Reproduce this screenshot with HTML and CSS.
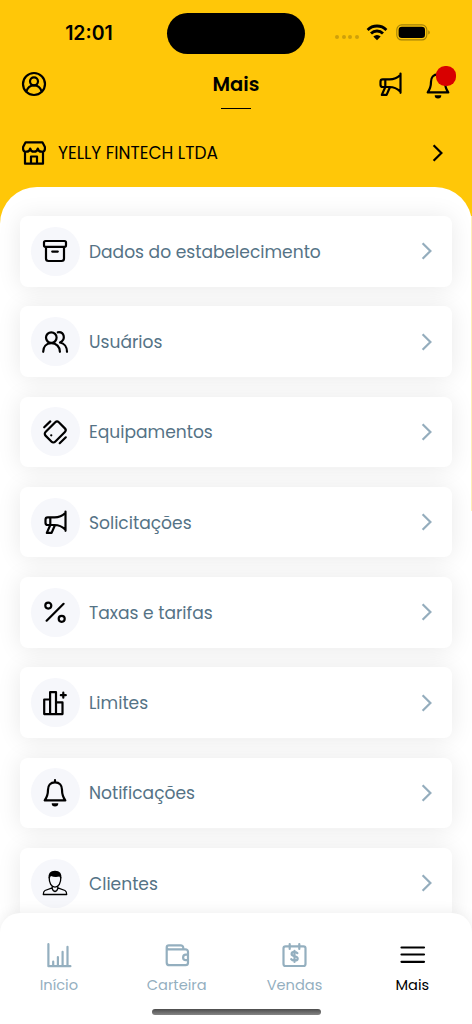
FILE: index.html
```html
<!DOCTYPE html>
<html lang="pt-BR">
<head>
<meta charset="utf-8">
<title>Mais</title>
<link rel="stylesheet" href="styles.css">
</head>
<body>
<svg class="sprite" aria-hidden="true">
  <symbol id="mega" viewBox="0 0 28 28"><path d="M9.300 9.400H6.800a2.300 2.300 0 0 0-2.300 2.300v3a2.300 2.300 0 0 0 2.300 2.300h2.500zM9.300 9.400h4.300c4.200 0 7.600-1.400 10.900-4.700v17c-3.400-3.200-6.900-4.700-10.900-4.700H9.300M9.200 17.200l-3.400 7.700h4.800l3.300-7.700M24.500 3.600v19.200"/></symbol>
  <symbol id="bell" viewBox="0 0 28 30"><path d="M14 4.400c-4.600 0-7 3.200-7 7.400 0 5-1.100 7.600-3.300 10.600h20.600C22.100 19.400 21 16.800 21 11.800c0-4.200-2.400-7.400-7-7.400zM14 2.200v2"/><path class="solid" d="M10.700 25.200h6.600a3.300 3.300 0 0 1-6.600 0z"/></symbol>
  <symbol id="chev" viewBox="0 0 12 18"><path d="M1.600 1.300 9.400 9l-7.800 7.700"/></symbol>
</svg>
<main class="phone">
  <header class="header">
    <div class="status">
      <div class="time">12:01</div>
      <div class="island"></div>
      <div class="signals">
        <div class="dots"><i></i><i></i><i></i><i></i></div>
        <svg class="wifi" viewBox="0 0 22 17"><path class="arc" d="M1.600 5.900a13.300 13.300 0 0 1 18.800 0M5 9.500a8.500 8.500 0 0 1 12 0"/><path class="solid" d="M11 16.200 7.300 12.500a5.300 5.300 0 0 1 7.400 0z"/></svg>
        <svg class="battery" viewBox="0 0 35 17"><rect class="case" x=".8" y=".9" width="30" height="15" rx="4.800"/><rect class="charge" x="2.600" y="2.700" width="26.400" height="11.400" rx="3.300"/><path class="tip" d="M32.300 6.200c2 .8 2 3.600 0 4.400z"/></svg>
      </div>
    </div>
    <div class="titlebar">
      <svg class="line profile" viewBox="0 0 28 28"><circle cx="14" cy="14" r="11"/><circle cx="14" cy="11.300" r="4"/><path d="M6.300 21.500c1.300-4 4-6.200 7.700-6.200s6.400 2.200 7.700 6.200"/></svg>
      <h1 class="title">Mais</h1>
      <div class="actions">
        <svg class="line mega"><use href="#mega"/></svg>
        <div class="bellbox"><svg class="line bell"><use href="#bell"/></svg><span class="badge"></span></div>
      </div>
    </div>
    <div class="company">
      <svg class="line store" viewBox="0 0 28 28"><path d="M5.600 3.300h16.800L24.900 8v2.200a3 3 0 0 1-3.300 2.500c-2 0-3.500-1.100-3.800-3.200-.3 2.100-1.800 3.200-3.800 3.200s-3.500-1.100-3.800-3.200c-.3 2.100-1.800 3.200-3.800 3.200a3 3 0 0 1-3.300-2.500V8zM5 12.500v12.200h18V12.500M11 24.500v-7h6v7"/></svg>
      <span class="name">YELLY FINTECH LTDA</span>
      <svg class="line chev"><use href="#chev"/></svg>
    </div>
  </header>
  <section class="sheet">
    <a class="card"><span class="disc"><svg class="line ic" viewBox="0 0 28 28"><rect x="3" y="4" width="22" height="5.800" rx="1.500"/><path d="M5 10v11.500a2.500 2.500 0 0 0 2.500 2.500h13a2.500 2.500 0 0 0 2.500-2.500V10M11.200 14.600h5.600"/></svg></span><span class="label">Dados do estabelecimento</span><svg class="line chev"><use href="#chev"/></svg></a>
    <a class="card"><span class="disc"><svg class="line ic" viewBox="0 0 28 28"><circle cx="10.300" cy="9.600" r="5.300"/><path d="M2.200 23.800c0-5 3-8.600 8.100-8.600s8.600 3.600 8.600 8.600M16.800 4.300c6.700-.8 8.300 7.400 2.200 10.200 4.200.7 7 4.500 7 9.300"/></svg></span><span class="label">Usuários</span><svg class="line chev"><use href="#chev"/></svg></a>
    <a class="card"><span class="disc"><svg class="line ic" viewBox="0 0 28 28"><rect x="4.800" y="7.200" width="18.800" height="13.600" rx="2.500" transform="rotate(-45 14.200 14)"/><path d="M3.200 9.300 9.300 3.400M18.700 25.200l6.100-5.900M10.200 17.300h.1"/></svg></span><span class="label">Equipamentos</span><svg class="line chev"><use href="#chev"/></svg></a>
    <a class="card"><span class="disc"><svg class="line ic"><use href="#mega"/></svg></span><span class="label">Solicitações</span><svg class="line chev"><use href="#chev"/></svg></a>
    <a class="card"><span class="disc"><svg class="line ic" viewBox="0 0 28 28"><circle cx="7.300" cy="7.600" r="3"/><circle cx="20.700" cy="20.800" r="3"/><path d="M22.600 5.800 5.600 22.700"/></svg></span><span class="label">Taxas e tarifas</span><svg class="line chev"><use href="#chev"/></svg></a>
    <a class="card"><span class="disc"><svg class="line ic" viewBox="0 0 28 28"><path d="M3.200 10.500h5.900v14.600H3.200zM9.100 3.200H15v21.900H9.100zM15 13.400h6.500v11.700H15zM19.800 6.200h5M22.300 3.700v5"/></svg></span><span class="label">Limites</span><svg class="line chev"><use href="#chev"/></svg></a>
    <a class="card"><span class="disc"><svg class="line bell"><use href="#bell"/></svg></span><span class="label">Notificações</span><svg class="line chev"><use href="#chev"/></svg></a>
    <a class="card"><span class="disc"><svg class="line ic thin" viewBox="0 0 28 28"><path d="M8.200 8.300c-.2 5.600 2.200 9.800 5.800 9.800s6-4.200 5.800-9.800M11.200 17.300v1.500L4 21.500c-1.400.7-1.700 1.700-1.700 4h23.400c0-2.300-.3-3.300-1.700-4l-7.200-2.700v-1.500M11 18.800c.5 2 1.500 3.500 3 3.700 1.500-.2 2.500-1.700 3-3.700"/><path class="solid" d="M7.800 9.500C6.800 4.500 9.300 1.700 14 1.700s7.200 2.800 6.200 7.800C19 9 18.600 8 18.400 7.500 15.600 8.300 12.300 8 9.900 7 9.500 8.200 8.800 9 7.800 9.500z"/></svg></span><span class="label">Clientes</span><svg class="line chev"><use href="#chev"/></svg></a>
  </section>
  <span class="scrolledge"></span>
  <nav class="tabs">
    <div class="tabrow">
      <a class="tab"><svg class="line ic" viewBox="0 0 28 28"><path d="M3.400 3.200v22h22M8.200 25v-4.500M12.900 25v-9M17.600 25V10.800M22.500 25V5.800"/></svg><span>Início</span></a>
      <a class="tab"><svg class="line ic" viewBox="0 0 28 28"><path d="M20.300 8.300V7a2.700 2.700 0 0 0-2.700-2.700H5.900a2.200 2.200 0 0 0-2.200 2.200v14.900a2.800 2.800 0 0 0 2.800 2.800h16a2.500 2.500 0 0 0 2.500-2.500V10.800a2.500 2.500 0 0 0-2.500-2.500H5.900A2.100 2.100 0 0 1 3.700 6.500M25 13.700h-2.200a2.700 2.700 0 0 0 0 5.400H25"/></svg><span>Carteira</span></a>
      <a class="tab"><svg class="line ic" viewBox="0 0 28 28"><rect x="3.500" y="5.300" width="22" height="19.700" rx="2"/><path d="M9.700 3v5M19.300 3v5M17.400 12.200c-.7-.9-1.600-1.300-2.900-1.300-1.700 0-2.900.8-2.900 2.100 0 3.200 6.100 1.300 6.100 4.500 0 1.400-1.300 2.200-3.200 2.200-1.500 0-2.600-.5-3.300-1.600M14.500 9.800v11.200"/></svg><span>Vendas</span></a>
      <a class="tab active"><svg class="line ic" viewBox="0 0 28 28"><path d="M3.500 6.500H26M3.500 13.500H26M3.500 20.800H26"/></svg><span>Mais</span></a>
    </div>
    <div class="homebar"></div>
  </nav>
</main>
</body>
</html>
```
FILE: styles.css
```css
* { box-sizing: border-box; }
body {
  margin: 0;
  font-family: Poppins, Inter, "Noto Sans", sans-serif;
  color: #000;
}
.sprite { position: absolute; width: 0; height: 0; }
.phone {
  position: relative;
  width: 472px;
  height: 1024px;
  overflow: hidden;
  background: #ffc708;
  display: flex;
  flex-direction: column;
}
.line {
  fill: none;
  stroke: currentColor;
  stroke-width: 2.200;
  stroke-linecap: round;
  stroke-linejoin: round;
  flex: none;
  display: block;
}
.solid { fill: currentColor; stroke: none; }
.header { height: 187px; flex: none; }

.status {
  height: 66px;
  display: grid;
  grid-template-columns: 167px 138px 167px;
  align-items: center;
}
.time {
  padding-left: 11px;
  text-align: center;
  font: 600 19.500px Inter, sans-serif;
}
.island { height: 41px; border-radius: 21px; background: #000; }
.signals { display: flex; align-items: center; padding-left: 30px; margin-top: -2px; }
.dots { display: flex; gap: 2.600px; margin: 10px 7.500px 0 0; }
.dots i { width: 4px; height: 4px; border-radius: 2px; background: #cfa00a; }
.wifi { width: 22px; height: 17px; margin-right: 7.500px; }
.arc { fill: none; stroke: #000; stroke-width: 2.800; }
.battery { width: 35px; height: 17px; }
.case { fill: none; stroke: #a38208; stroke-width: 1.100; }
.tip { fill: #a38208; }

.titlebar {
  height: 44px;
  display: grid;
  grid-template-columns: 1fr 1fr 1fr;
  padding: 4px 16px 0 20px;
}
.profile { width: 28px; height: 28px; }
.title {
  margin: 3px 0 0;
  width: 60px;
  justify-self: center;
  position: relative;
  left: -2px;
  text-align: center;
  font-size: 19.500px;
  line-height: 24px;
  font-weight: 600;
}
.title::after {
  content: "";
  display: block;
  width: 30px;
  height: 1px;
  margin: 11px auto 0;
  background: #000;
}
.actions { display: flex; justify-content: flex-end; gap: 20px; padding-right: 4px; }
.mega, .ic { width: 28px; height: 28px; }
.bell { width: 28px; height: 30px; }
.bellbox { position: relative; width: 28px; height: 30px; }
.badge {
  position: absolute;
  left: 12px;
  top: -4px;
  width: 20px;
  height: 20px;
  border-radius: 9px;
  background: #d80000;
}
.company { height: 28px; margin-top: 28.500px; padding: 0 28px 0 20px; display: flex; align-items: center; }
.store { width: 28px; height: 28px; }
.name { flex: 1; margin-left: 10px; font-size: 17px; }
.chev { width: 12px; height: 18px; stroke-linecap: butt; stroke-linejoin: miter; }

.sheet {
  height: 837px;
  flex: none;
  padding: 29px 20px 0;
  display: flex;
  flex-direction: column;
  gap: 19.700px;
  background: #fff;
  border-radius: 37px 37px 0 0;
}
.card {
  height: 70.600px;
  flex: none;
  padding: 0 19px 0 10.700px;
  display: flex;
  align-items: center;
  background: #fff;
  border-radius: 8px;
  box-shadow: 0 1px 24px rgba(0, 0, 0, .09);
}
.disc {
  width: 49px;
  height: 49px;
  border-radius: 50%;
  background: #f6f7fb;
  display: grid;
  place-items: center;
}
.thin { stroke-width: 1.300; }
.label { flex: 1; margin-left: 9.300px; padding-top: 1px; font-size: 17.100px; color: #557386; white-space: nowrap; }
.card .chev { color: #94adbd; }

.scrolledge {
  position: absolute;
  right: 0;
  top: 216px;
  width: 1px;
  height: 295px;
  background: #fff0b5;
}
.tabs {
  position: absolute;
  left: 0;
  right: 0;
  bottom: 0;
  height: 111px;
  background: #fff;
  border-radius: 20px 20px 0 0;
  box-shadow: 0 -1px 14px rgba(0, 0, 0, .07);
}
.tabrow { display: grid; grid-template-columns: repeat(4, 117.800px); padding-top: 27.500px; }
.tab {
  display: flex;
  flex-direction: column;
  align-items: center;
  gap: 6px;
  color: #94afbf;
  font-size: 14.600px;
  line-height: 20px;
}
.tab.active { color: #000; }
.homebar {
  width: 169px;
  height: 5.500px;
  margin: 14.500px auto 0;
  border-radius: 3px;
  background: linear-gradient(#4c4c4c, #858585);
}
```
